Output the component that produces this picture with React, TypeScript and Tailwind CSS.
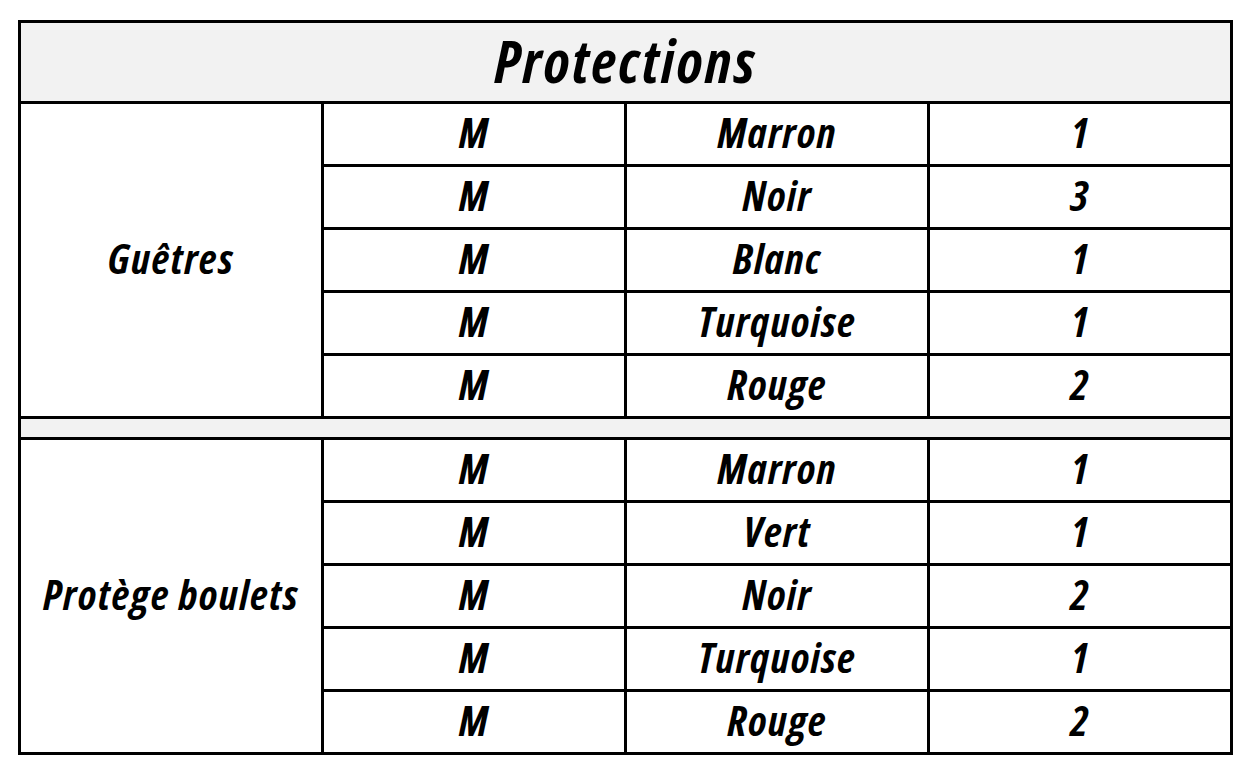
const groups = [
  {
    name: "Guêtres",
    rows: [
      { size: "M", color: "Marron", qty: "1" },
      { size: "M", color: "Noir", qty: "3" },
      { size: "M", color: "Blanc", qty: "1" },
      { size: "M", color: "Turquoise", qty: "1" },
      { size: "M", color: "Rouge", qty: "2" },
    ],
  },
  {
    name: "Protège boulets",
    rows: [
      { size: "M", color: "Marron", qty: "1" },
      { size: "M", color: "Vert", qty: "1" },
      { size: "M", color: "Noir", qty: "2" },
      { size: "M", color: "Turquoise", qty: "1" },
      { size: "M", color: "Rouge", qty: "2" },
    ],
  },
];

const font = {
  fontFamily: '"Open Sans", "DejaVu Sans Condensed", sans-serif',
};

function Cell({ children }: { children: React.ReactNode }) {
  return (
    <div className="bg-white flex items-center justify-center pb-[4px] whitespace-nowrap text-[42px] font-bold italic font-stretch-condensed tracking-[1.2px] text-black leading-none">
      {children}
    </div>
  );
}

export default function App() {
  return (
    <div className="min-h-screen bg-white pt-[20px] pl-[18px]" style={font}>
      <div className="inline-grid bg-black p-[3px] gap-[3px] grid-cols-[repeat(4,300px)] grid-rows-[78px_repeat(5,60px)_18px_repeat(5,60px)]">
        <div className="col-span-4 bg-[#f2f2f2] flex items-center justify-center pb-[4px] text-[59px] font-bold italic font-stretch-condensed tracking-[2.2px] text-black leading-none">
          Protections
        </div>
        {groups.map((group, gi) => (
          <>
            {gi > 0 && <div key={`sp-${gi}`} className="col-span-4 bg-[#f2f2f2]" />}
            <div
              key={group.name}
              className="row-span-5 bg-white flex items-center justify-center pb-[4px] whitespace-nowrap text-[42px] font-bold italic font-stretch-condensed tracking-[1.4px] text-black leading-none"
            >
              {group.name}
            </div>
            {group.rows.map((row, ri) => (
              <>
                <Cell key={`s-${gi}-${ri}`}>{row.size}</Cell>
                <Cell key={`c-${gi}-${ri}`}>{row.color}</Cell>
                <Cell key={`q-${gi}-${ri}`}>{row.qty}</Cell>
              </>
            ))}
          </>
        ))}
      </div>
    </div>
  );
}
